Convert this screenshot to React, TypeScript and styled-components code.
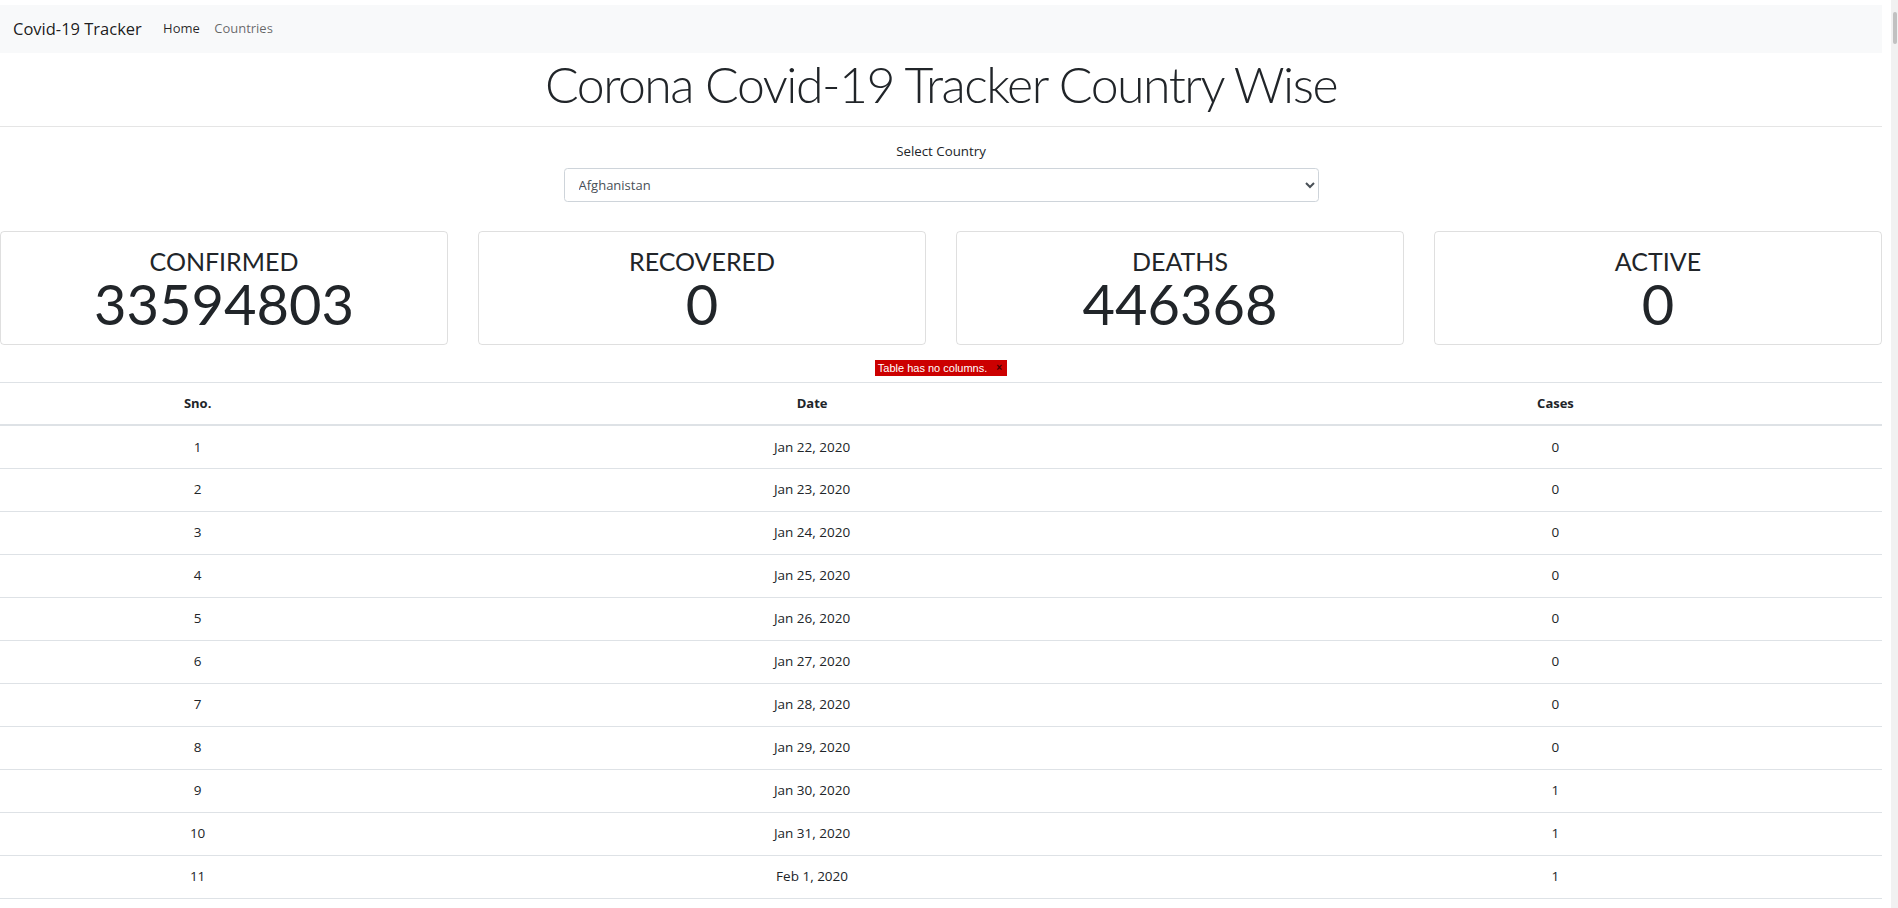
import React from "react";
import styled, { createGlobalStyle } from "styled-components";

const GlobalStyle = createGlobalStyle`
  html, body { margin: 0; padding: 0; background: #fff; }
  body {
    padding-top: 5px;
    font-family: "Open Sans", "Noto Sans", sans-serif;
    font-size: 13.5px;
    line-height: 1.5;
    color: #212529;
    overflow-x: hidden;
  }
  * { box-sizing: border-box; }
  ::-webkit-scrollbar { width: 0; height: 0; }
`;

const Page = styled.div`
  width: calc(100vw - 16px);
`;

const ScrollTrack = styled.div`
  position: fixed;
  top: 0;
  right: 0;
  width: 16px;
  height: 100vh;
  background: linear-gradient(to right, #ffffff 9px, #f1f1f1 9px);
`;

const ScrollThumb = styled.div`
  margin: 12px 1px 0 11px;
  height: 32px;
  border-radius: 2px;
  background: #c1c1c1;
`;

const Navbar = styled.nav`
  display: flex;
  align-items: center;
  height: 48px;
  padding: 0 13px;
  background: #f8f9fa;
`;

const Brand = styled.a`
  font-size: 16.5px;
  color: rgba(0, 0, 0, 0.9);
  margin-right: 14px;
  text-decoration: none;
`;

const NavLink = styled.a<{ $active?: boolean }>`
  padding: 0 7.2px;
  font-size: 13px;
  color: ${(p) => (p.$active ? "rgba(0,0,0,0.85)" : "rgba(0,0,0,0.6)")};
  text-decoration: none;
`;

const Title = styled.h1`
  margin: 1px 0 0;
  text-align: center;
  font-family: "Lato", sans-serif;
  font-weight: 300;
  font-size: 50px;
  line-height: 1.2;
  letter-spacing: -1.5px;
  color: #212529;
`;

const Rule = styled.hr`
  margin: 12px 0 0;
  border: 0;
  border-top: 1px solid rgba(0, 0, 0, 0.1);
`;

const FormGroup = styled.div`
  display: flex;
  flex-direction: column;
  align-items: center;
  padding-top: 14px;
`;

const Label = styled.label`
  font-size: 13.3px;
  line-height: 21.6px;
  margin-bottom: 5px;
`;

const Select = styled.select`
  width: 755px;
  height: 34px;
  padding: 0 10px;
  border: 1px solid #ced4da;
  border-radius: 3.6px;
  background: #fff;
  font-family: "Open Sans", "Noto Sans", sans-serif;
  font-size: 13px;
  color: #495057;
`;

const Cards = styled.div`
  display: grid;
  grid-template-columns: repeat(4, 1fr);
  column-gap: 30px;
  margin-top: 29px;
`;

const Card = styled.div`
  height: 114px;
  border: 1px solid rgba(0, 0, 0, 0.125);
  border-radius: 4px;
  padding-top: 15px;
  text-align: center;
  font-family: "Lato", sans-serif;
  color: #212529;
`;

const CardTitle = styled.div`
  font-size: 25px;
  line-height: 28.8px;
`;

const CardValue = styled.div`
  font-size: 56px;
  line-height: 58px;
`;

const ErrorRow = styled.div`
  display: flex;
  justify-content: center;
  margin: 15px 0 6px;
`;

const ErrorBox = styled.span`
  display: inline-flex;
  align-items: center;
  height: 16px;
  padding: 0 2px 0 3px;
  background: #cc0000;
  color: #fff;
  font-family: "Liberation Sans", Arial, sans-serif;
  font-size: 11px;
  line-height: 16px;
`;

const ErrorClose = styled.span`
  margin-left: 9px;
  color: #400;
  font-size: 10px;
  font-weight: bold;
  padding-right: 3px;
`;

const Table = styled.table`
  width: 100%;
  border-collapse: collapse;
  table-layout: fixed;
  font-size: 13.5px;
  color: #212529;
`;

const Th = styled.th<{ $w: string }>`
  width: ${(p) => p.$w};
  height: 43px;
  padding: 0 10px;
  text-align: center;
  font-weight: 700;
  font-size: 13px;
  border-top: 1px solid #dee2e6;
  border-bottom: 2px solid #dee2e6;
`;

const Td = styled.td`
  height: 43px;
  padding: 0 10px;
  text-align: center;
  border-top: 1px solid #dee2e6;
`;

const MONTHS = ["Jan", "Feb", "Mar", "Apr", "May", "Jun", "Jul", "Aug", "Sep", "Oct", "Nov", "Dec"];

const rows = Array.from({ length: 600 }, (_, i) => {
  const d = new Date(Date.UTC(2020, 0, 22 + i));
  const date = `${MONTHS[d.getUTCMonth()]} ${d.getUTCDate()}, ${d.getUTCFullYear()}`;
  let cases = 0;
  if (i >= 8 && i < 12) cases = 1;
  else if (i >= 12) cases = Math.floor(Math.pow(i - 10, 2.2));
  return { sno: i + 1, date, cases };
});

const stats = [
  { label: "CONFIRMED", value: "33594803" },
  { label: "RECOVERED", value: "0" },
  { label: "DEATHS", value: "446368" },
  { label: "ACTIVE", value: "0" },
];

export default function App() {
  return (
    <>
      <GlobalStyle />
      <Page>
        <Navbar>
          <Brand href="#">Covid-19 Tracker</Brand>
          <NavLink href="#" $active>Home</NavLink>
          <NavLink href="#">Countries</NavLink>
        </Navbar>
        <Title>Corona Covid-19 Tracker Country Wise</Title>
        <Rule />
        <FormGroup>
          <Label htmlFor="country">Select Country</Label>
          <Select id="country" defaultValue="Afghanistan">
            <option>Afghanistan</option>
            <option>Albania</option>
            <option>Algeria</option>
          </Select>
        </FormGroup>
        <Cards>
          {stats.map((s) => (
            <Card key={s.label}>
              <CardTitle>{s.label}</CardTitle>
              <CardValue>{s.value}</CardValue>
            </Card>
          ))}
        </Cards>
        <ErrorRow>
          <ErrorBox>
            Table has no columns.
            <ErrorClose>×</ErrorClose>
          </ErrorBox>
        </ErrorRow>
        <Table>
          <thead>
            <tr>
              <Th $w="21%">Sno.</Th>
              <Th $w="44.3%">Date</Th>
              <Th $w="34.7%">Cases</Th>
            </tr>
          </thead>
          <tbody>
            {rows.map((r) => (
              <tr key={r.sno}>
                <Td>{r.sno}</Td>
                <Td>{r.date}</Td>
                <Td>{r.cases}</Td>
              </tr>
            ))}
          </tbody>
        </Table>
      </Page>
      <ScrollTrack>
        <ScrollThumb />
      </ScrollTrack>
    </>
  );
}
